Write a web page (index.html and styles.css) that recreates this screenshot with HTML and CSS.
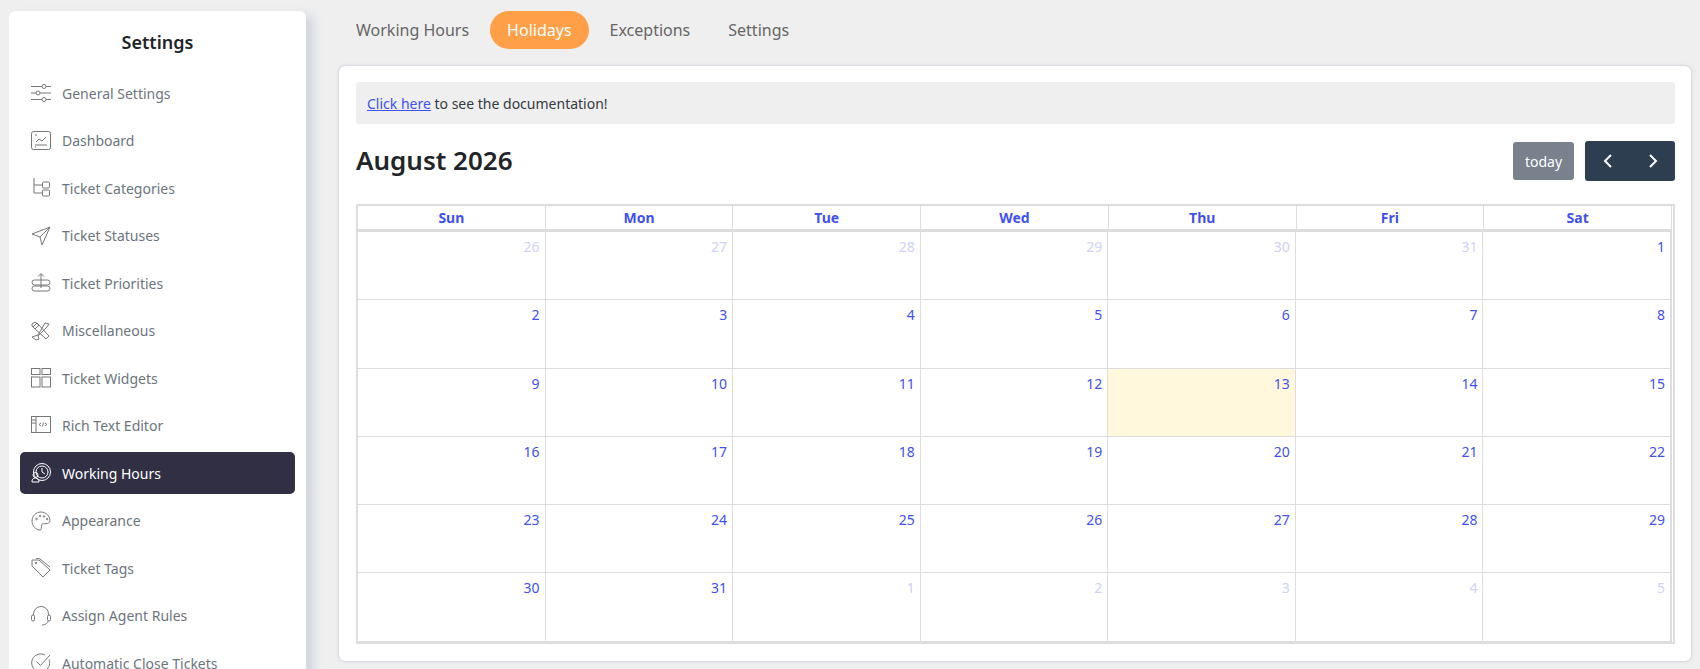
FILE: index.html
```html
<!DOCTYPE html>
<html lang="en">
<head>
<meta charset="utf-8">
<title>Settings</title>
<link rel="stylesheet" href="styles.css">
</head>
<body>
<div class="page">
<aside class="sidebar">
  <h2 class="side-title">Settings</h2>
  <nav class="menu">
    <a class="item"><svg class="ico" viewBox="0 0 20 20"><path d="M0 3.5h11M15 3.5h5M0 10h5M9 10h11M0 16.5h11M15 16.5h5"/><circle cx="13" cy="3.5" r="2"/><circle cx="7" cy="10" r="2"/><circle cx="13" cy="16.5" r="2"/></svg>General Settings</a>
    <a class="item"><svg class="ico" viewBox="0 0 20 20"><rect x=".5" y=".5" width="19" height="18" rx="2"/><path d="M5 11l3-3 3 2 4-4M4 14h12M4 4h2M4 16h1"/></svg>Dashboard</a>
    <a class="item"><svg class="ico" viewBox="0 0 20 20"><path d="M3 0v15h8M3 7h8"/><rect x="11.500" y="4" width="7" height="6" rx="1"/><rect x="11.500" y="12" width="7" height="6" rx="1"/></svg>Ticket Categories</a>
    <a class="item"><svg class="ico" viewBox="0 0 20 20"><path d="M19 1L1 8l8 3 2 8z"/><path d="M9 11L19 1"/></svg>Ticket Statuses</a>
    <a class="item"><svg class="ico" viewBox="0 0 20 20"><path d="M10 1v14M7 3.500L10 .5l3 3"/><rect x="1" y="7" width="18" height="5" rx="2.500"/><rect x="1" y="13" width="18" height="5" rx="2.500"/></svg>Ticket Priorities</a>
    <a class="item"><svg class="ico" viewBox="0 0 20 20"><path d="M2 6l4-4 12 13-3 3zM14 2l4 1-2 3-9 9 1 3-3 1-4-3 3-1 3-1z"/><path d="M1 3l3-2 4 3-4 4-3-3z"/></svg>Miscellaneous</a>
    <a class="item"><svg class="ico" viewBox="0 0 20 20"><rect x=".5" y=".5" width="8.500" height="6"/><rect x="11" y=".5" width="8.500" height="6"/><rect x=".5" y="9" width="8.500" height="10"/><rect x="11" y="9" width="8.500" height="10"/></svg>Ticket Widgets</a>
    <a class="item"><svg class="ico" viewBox="0 0 20 20"><rect x=".5" y=".5" width="19" height="16"/><path d="M5 .5v16M.5 4h4.500M.5 7h4.500M10 7L8 8.500 10 10M14 7l2 1.500L14 10M12.500 6.500l-1 4"/></svg>Rich Text Editor</a>
    <a class="item active"><svg class="ico" viewBox="0 0 20 20"><circle cx="11" cy="9" r="8.500"/><circle cx="11" cy="9" r="6"/><path d="M11 5v4l3 2"/><circle cx="4.500" cy="12" r="2.500"/><path d="M1 19v-1c0-2 2-3 3.500-3S8 16 8 18v1z"/></svg>Working Hours</a>
    <a class="item"><svg class="ico" viewBox="0 0 20 20"><path d="M10 1C5 1 1 5 1 10s4 9 8 9c2 0 1-4 2-6 1-1 7 1 8-3 0-5-4-9-9-9z"/><circle cx="5.500" cy="8" r=".8"/><circle cx="9" cy="5" r=".8"/><circle cx="13" cy="5.500" r=".8"/><circle cx="16" cy="8" r=".8"/></svg>Appearance</a>
    <a class="item"><svg class="ico" viewBox="0 0 20 20"><path d="M1 5V2l7 0 11 10-7 7L1 8z"/><path d="M5 .5l3-.2L19 9"/><circle cx="5" cy="5" r=".8"/></svg>Ticket Tags</a>
    <a class="item"><svg class="ico" viewBox="0 0 20 20"><path d="M2.500 9V8a7.500 7.500 0 0 1 15 0v1M17 15c0 2-3 4-6 4"/><rect x=".5" y="9" width="3" height="6" rx="1.500"/><rect x="16.500" y="9" width="3" height="6" rx="1.500"/></svg>Assign Agent Rules</a>
    <a class="item"><svg class="ico" viewBox="0 0 20 20"><path d="M18 6.500A9 9 0 1 1 14 2"/><path d="M5.500 8.500l4 4L19 2"/></svg>Automatic Close Tickets</a>
  </nav>
</aside>
<main class="main">
  <div class="tabs">
    <a class="tab">Working Hours</a>
    <a class="tab selected">Holidays</a>
    <a class="tab">Exceptions</a>
    <a class="tab">Settings</a>
  </div>
  <section class="card">
    <div class="notice"><a class="doc" href="#">Click here</a> to see the documentation!</div>
    <div class="toolbar">
      <h2 class="month">August 2026</h2>
      <div class="actions">
        <button class="today">today</button>
        <div class="nav-btns">
          <button class="nav"><svg viewBox="0 0 12 16"><path d="M9 2L3 8l6 6"/></svg></button>
          <button class="nav"><svg viewBox="0 0 12 16"><path d="M3 2l6 6-6 6"/></svg></button>
        </div>
      </div>
    </div>
    <div class="calendar">
      <div class="head">
        <div>Sun</div><div>Mon</div><div>Tue</div><div>Wed</div><div>Thu</div><div>Fri</div><div>Sat</div>
      </div>
      <div class="grid">
        <div class="day other">26</div><div class="day other">27</div><div class="day other">28</div><div class="day other">29</div><div class="day other">30</div><div class="day other">31</div><div class="day">1</div>
        <div class="day">2</div><div class="day">3</div><div class="day">4</div><div class="day">5</div><div class="day">6</div><div class="day">7</div><div class="day">8</div>
        <div class="day">9</div><div class="day">10</div><div class="day">11</div><div class="day">12</div><div class="day now">13</div><div class="day">14</div><div class="day">15</div>
        <div class="day">16</div><div class="day">17</div><div class="day">18</div><div class="day">19</div><div class="day">20</div><div class="day">21</div><div class="day">22</div>
        <div class="day">23</div><div class="day">24</div><div class="day">25</div><div class="day">26</div><div class="day">27</div><div class="day">28</div><div class="day">29</div>
        <div class="day">30</div><div class="day">31</div><div class="day other">1</div><div class="day other">2</div><div class="day other">3</div><div class="day other">4</div><div class="day other">5</div>
      </div>
    </div>
  </section>
</main>
</div>
</body>
</html>
```
FILE: styles.css
```css
* { box-sizing: border-box; }
html, body { margin: 0; height: 100%; overflow: hidden; }
body { background: #efefef; font-family: "Noto Sans", "Open Sans", sans-serif; font-size: 14px; color: #212529; }
.page { display: flex; height: 669px; padding: 11px 9px 8px 9px; gap: 33px; }
.sidebar { flex: 0 0 297px; height: 800px; background: #fff; border-radius: 6px; box-shadow: 8px 4px 10px rgba(150,165,190,.3); padding: 0 11px; }
.side-title { margin: 0; padding-top: 17px; height: 57px; text-align: center; font-size: 18px; font-weight: 600; line-height: 28px; color: #212529; }
.menu { display: flex; flex-direction: column; gap: 5.5px; margin-top: 4px; }
.item { display: flex; align-items: center; gap: 11px; height: 42px; padding-left: 11px; border-radius: 5px; color: #6c757d; font-size: 14px; }
.item.active { background: #302f44; color: #fff; }
.ico { width: 20px; height: 20px; flex: none; fill: none; stroke: #777; stroke-width: 1; }
.active .ico { stroke: #fff; }
.main { flex: 1; min-width: 0; display: flex; flex-direction: column; }
.tabs { display: flex; gap: 0; height: 38px; margin-bottom: 17px; padding-left: 0; }
.tab { display: flex; align-items: center; padding: 0 17px; height: 38px; border-radius: 19px; font-size: 16px; color: #666; margin-right: 4px; }
.tab.selected { background: #ff9f47; color: #fff; }
.card { height: 595px; background: #fff; border-radius: 6px; box-shadow: 0 0 3px rgba(120,135,160,.5); padding: 16px 16px 0 17px; }
.notice { height: 42px; background: #efefef; border-radius: 3px; padding: 0 11px; display: flex; align-items: center; white-space: pre; font-size: 14px; color: #343a40; }
.doc { color: #3f51f0; }
.toolbar { display: flex; justify-content: space-between; align-items: center; margin-top: 17px; height: 40px; margin-bottom: 23px; }
.month { margin: 0; font-size: 26px; font-weight: 600; color: #212529; line-height: 1.2; }
.actions { display: flex; align-items: center; gap: 11px; }
button { font-family: inherit; border: 0; color: #fff; }
.today { width: 61px; height: 38px; border-radius: 3px; background: #78818c; font-size: 14px; padding: 0; }
.nav-btns { display: flex; width: 90px; height: 40px; background: #2c3e50; border-radius: 3px; }
.nav { flex: 1; background: none; padding: 0; display: flex; align-items: center; justify-content: center; }
.nav svg { width: 12px; height: 16px; fill: none; stroke: #fff; stroke-width: 2; }
.calendar { border: 2px solid #ddd; border-right-width: 2px; height: 440px; padding-right: 1px; }
.head { display: grid; grid-template-columns: repeat(7, 1fr); height: 26px; border-bottom: 3px solid #ddd; }
.head div { text-align: center; font-weight: 700; font-size: 14px; line-height: 23px; color: #3f51f0; border-right: 1px solid #ddd; }
.grid { display: grid; grid-template-columns: repeat(7, 1fr); grid-auto-rows: 68.3px; border-bottom: 1px solid #ddd; border-right: 1px solid #ddd; }
.day { border-right: 1px solid #ddd; border-bottom: 1px solid #ddd; text-align: right; padding: 5px 5px 0 0; font-size: 14px; line-height: 20px; color: #3f51f0; }
.day.other { color: #cdd2f8; }
.day.now { background: #fff8dd; }
```
